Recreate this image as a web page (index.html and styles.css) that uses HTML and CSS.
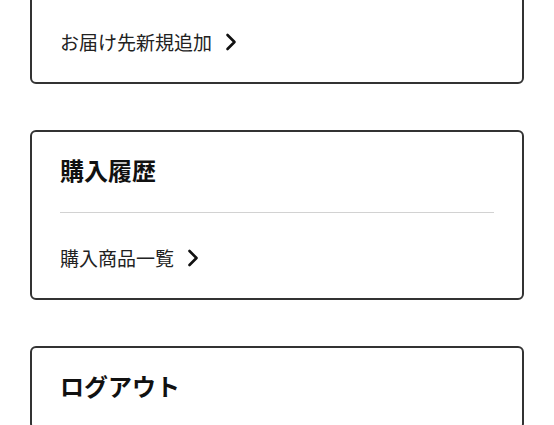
FILE: index.html
```html
<!DOCTYPE html>
<html lang="ja">
<head>
<meta charset="utf-8">
<title>マイページ</title>
<link rel="stylesheet" href="styles.css">
</head>
<body>
<main class="menu">
  <section class="card">
    <a class="card-link" href="#">お届け先新規追加<svg class="chev" viewBox="0 0 12 18" width="12" height="18"><polyline points="2.5,2 9.5,9 2.5,16" fill="none" stroke="#111" stroke-width="2.6" stroke-linecap="round" stroke-linejoin="round"/></svg></a>
  </section>
  <section class="card">
    <h2 class="card-title">購入履歴</h2>
    <a class="card-link" href="#">購入商品一覧<svg class="chev" viewBox="0 0 12 18" width="12" height="18"><polyline points="2.5,2 9.5,9 2.5,16" fill="none" stroke="#111" stroke-width="2.6" stroke-linecap="round" stroke-linejoin="round"/></svg></a>
  </section>
  <section class="card">
    <h2 class="card-title">ログアウト</h2>
  </section>
</main>
</body>
</html>
```
FILE: styles.css
```css
html, body {
  margin: 0;
  padding: 0;
  background: #fff;
}
body {
  font-family: "Noto Sans CJK JP", "Noto Sans", sans-serif;
  color: #222;
  overflow: hidden;
}
.menu {
  display: flex;
  flex-direction: column;
  gap: 46px;
  padding: 0 30px;
  margin-top: -6px;
}
.card {
  border: 2px solid #333;
  border-radius: 6px;
  padding: 0 28px;
  display: flex;
  flex-direction: column;
}
.card-title {
  margin: 0;
  padding: 20px 0 24px;
  font-size: 24px;
  line-height: 36px;
  font-weight: 700;
  color: #111;
}
.card-link {
  display: flex;
  align-items: center;
  gap: 13px;
  border-top: 1px solid #d2d2d2;
  padding: 31px 0 26px;
  font-size: 19px;
  line-height: 28px;
  height: 28px;
  color: #222;
  text-decoration: none;
}
.chev {
  display: block;
  flex: none;
}
```
